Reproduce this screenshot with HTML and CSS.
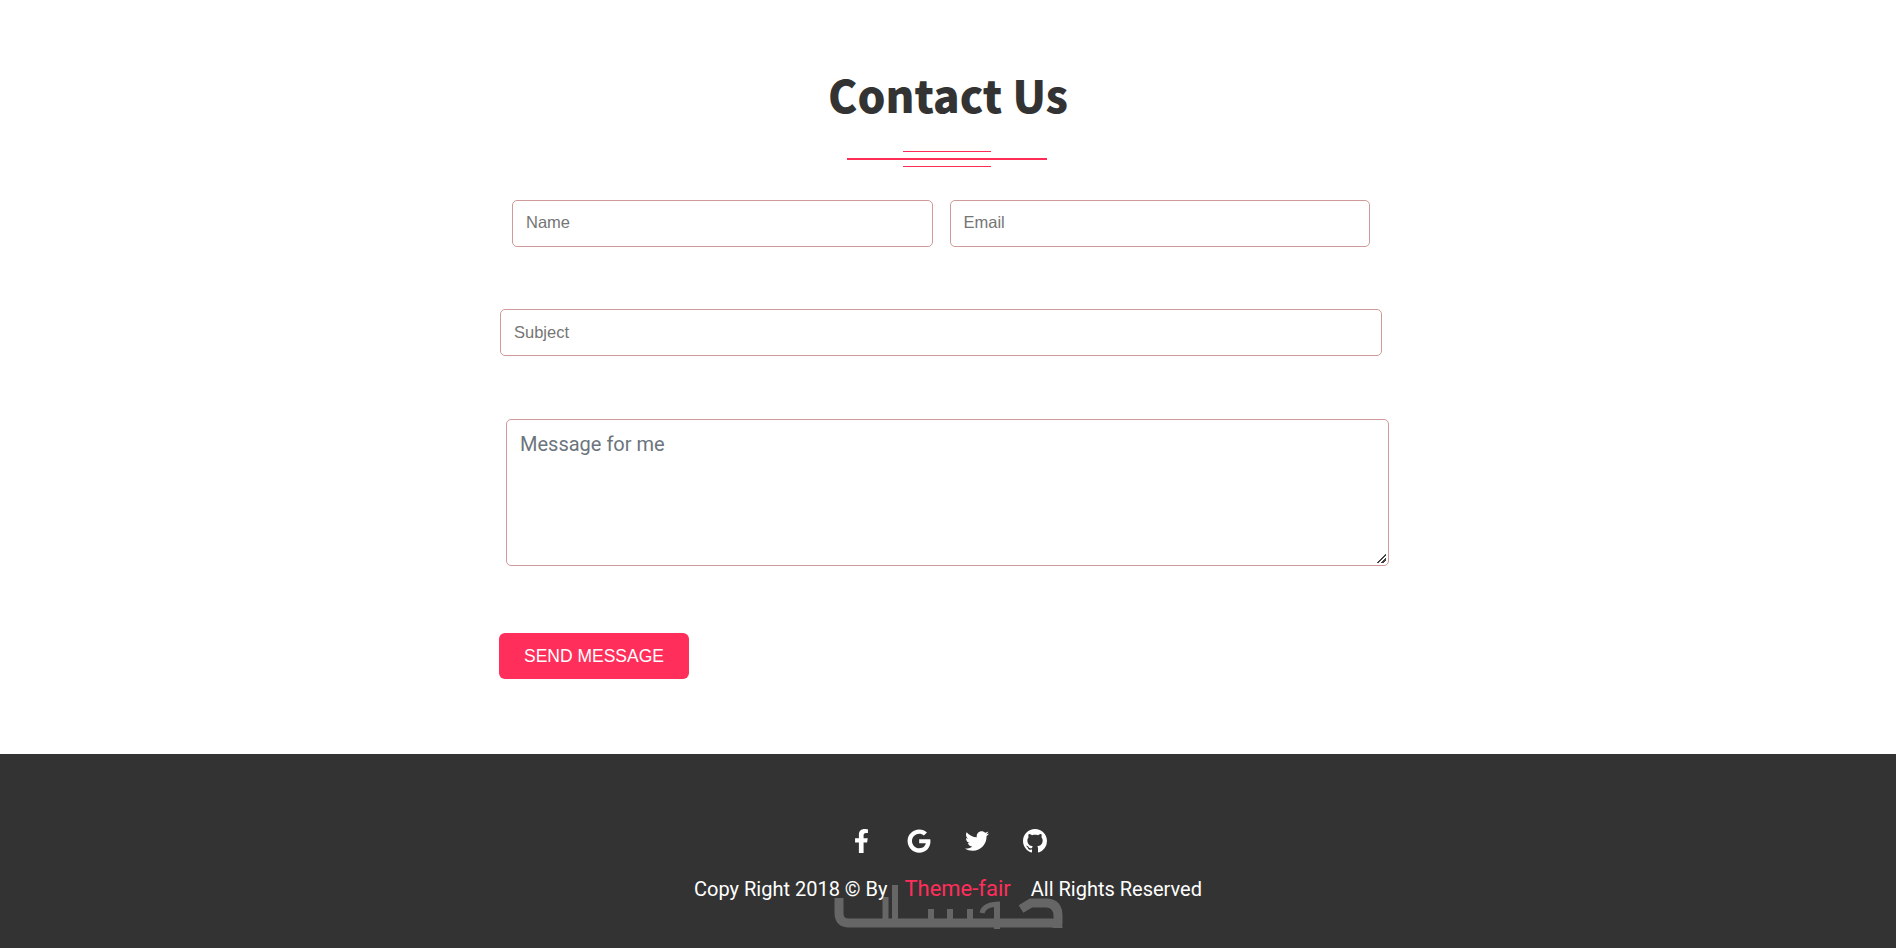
FILE: index.html
```html
<!doctype html>
<html lang="en">
  <head>
    <meta charset="UTF-8" />
    <title>Contact Us</title>
    <link rel="stylesheet" href="styles.css">
  </head>
  <body>
    <section class="contact">
      <h2 class="title">Contact Us</h2>
      <div class="divider">
        <span class="divider-short"></span>
        <span class="divider-long"></span>
        <span class="divider-short"></span>
      </div>
      <form class="contact-form">
        <div class="row-two">
          <input type="text" class="field" placeholder="Name" />
          <input type="text" class="field" placeholder="Email" />
        </div>
        <input type="text" class="field field-subject" placeholder="Subject" />
        <textarea class="field-message" placeholder="Message for me"></textarea>
        <button type="button" class="send-btn">SEND MESSAGE</button>
      </form>
    </section>
    <footer class="footer">
      <div class="social">
        <a href="#" class="social-link">
          <svg viewBox="0 0 320 512" width="15" height="24"><path fill="#fff" d="M279.14 288l14.22-92.66h-88.91v-60.13c0-25.35 12.42-50.06 52.24-50.06h40.42V6.26S260.43 0 225.36 0c-73.22 0-121.08 44.38-121.08 124.72v70.62H22.89V288h81.39v224h100.17V288z"/></svg>
        </a>
        <a href="#" class="social-link">
          <svg viewBox="0 0 488 512" width="24" height="24"><path fill="#fff" d="M488 261.8C488 403.3 391.1 504 248 504 110.8 504 0 393.2 0 256S110.8 8 248 8c66.8 0 123 24.5 166.3 64.9l-67.5 64.9C258.5 52.6 94.3 116.6 94.3 256c0 86.5 69.1 156.6 153.7 156.6 98.2 0 135-70.4 140.8-106.9H248v-85.3h236.1c2.3 12.7 3.9 24.9 3.9 41.4z"/></svg>
        </a>
        <a href="#" class="social-link">
          <svg viewBox="0 0 512 512" width="24" height="24"><path fill="#fff" d="M459.37 151.716c.325 4.548.325 9.097.325 13.645 0 138.72-105.583 298.558-298.558 298.558-59.452 0-114.68-17.219-161.137-47.106 8.447.974 16.568 1.299 25.34 1.299 49.055 0 94.213-16.568 130.274-44.832-46.132-.975-84.792-31.188-98.112-72.772 6.498.974 12.995 1.624 19.818 1.624 9.421 0 18.843-1.3 27.614-3.573-48.081-9.747-84.143-51.98-84.143-102.985v-1.299c13.969 7.797 30.214 12.67 47.431 13.319-28.264-18.843-46.781-51.005-46.781-87.391 0-19.492 5.197-37.36 14.294-52.954 51.655 63.675 129.3 105.258 216.365 109.807-1.624-7.797-2.599-15.918-2.599-24.04 0-57.828 46.782-104.934 104.934-104.934 30.213 0 57.502 12.67 76.67 33.137 23.715-4.548 46.456-13.32 66.599-25.34-7.798 24.366-24.366 44.833-46.132 57.827 21.117-2.273 41.584-8.122 60.426-16.243-14.292 20.791-32.161 39.308-52.628 54.253z"/></svg>
        </a>
        <a href="#" class="social-link">
          <svg viewBox="0 0 16 16" width="24" height="24"><path fill="#fff" d="M8 0C3.58 0 0 3.58 0 8c0 3.54 2.29 6.53 5.47 7.59.4.07.55-.17.55-.38 0-.19-.01-.82-.01-1.49-2.01.37-2.53-.49-2.69-.94-.09-.23-.48-.94-.82-1.13-.28-.15-.68-.52-.01-.53.63-.01 1.08.58 1.23.82.72 1.21 1.87.87 2.33.66.07-.52.28-.87.51-1.07-1.78-.2-3.64-.89-3.64-3.95 0-.87.31-1.59.82-2.15-.08-.2-.36-1.02.08-2.12 0 0 .67-.21 2.2.82.64-.18 1.32-.27 2-.27s1.36.09 2 .27c1.53-1.04 2.2-.82 2.2-.82.44 1.1.16 1.92.08 2.12.51.56.82 1.27.82 2.15 0 3.07-1.87 3.75-3.65 3.95.29.25.54.73.54 1.48 0 1.07-.01 1.93-.01 2.2 0 .21.15.46.55.38A8.01 8.01 0 0 0 16 8c0-4.42-3.58-8-8-8z"/></svg>
        </a>
      </div>
      <p class="copyright">Copy Right 2018 © By <a href="#" class="copyright-link">Theme-fair</a> All Rights Reserved</p>
      <svg class="watermark" viewBox="0 0 230 50" width="230" height="50">
        <path fill="none" stroke="#fff" stroke-width="9" d="M5 18V33Q5 43 15 43H217Q224 43 224 47V48M187 29L197 23H213Q224 24 224 36V44"/>
        <path fill="none" stroke="#fff" stroke-width="6" d="M51.5 17V42M61 5V42M97 29V40M116 29V40M136 29V40M163 23V49"/>
        <path fill="none" stroke="#fff" stroke-width="5" d="M148 33Q150 24 166 24"/>
      </svg>
    </footer>
  </body>
</html>
```
FILE: styles.css
```css
* {
  box-sizing: border-box;
}
body {
  margin: 0;
  background: #fff;
  font-family: "Roboto", sans-serif;
}
.contact {
  height: 754px;
  padding-top: 64px;
}
.title {
  margin: 0;
  text-align: center;
  font-family: "Noto Sans CJK SC", "Liberation Sans", sans-serif;
  font-size: 44px;
  font-weight: 900;
  line-height: 60px;
  color: #333;
}
.divider {
  display: flex;
  flex-direction: column;
  align-items: center;
  margin: 27px 2px 0 0;
}
.divider-short {
  width: 88px;
  height: 1px;
  background: #ff2d55;
}
.divider-long {
  width: 200px;
  height: 2px;
  margin: 6px 0;
  background: #ff2d55;
}
.contact-form {
  display: flex;
  flex-direction: column;
  width: 890px;
  margin: 33px 0 0 499px;
}
.row-two {
  display: flex;
  gap: 17px;
  margin-left: 13px;
  width: 858px;
}
.field {
  height: 47px;
  padding: 0 13px 2px;
  border: 1px solid #cf9a9a;
  border-radius: 5px;
  font-family: "Liberation Sans", Arial, sans-serif;
  font-size: 16.5px;
  outline: none;
  flex: 1;
  min-width: 0;
}
.field::placeholder {
  color: #757575;
  opacity: 1;
}
.field-message::placeholder {
  color: #6c757d;
  opacity: 1;
}
.field-subject {
  flex: none;
  width: 882px;
  margin: 62px 0 0 1px;
  padding-bottom: 0;
}
.field-message {
  display: block;
  width: 883px;
  height: 147px;
  margin: 63px 0 0 7px;
  padding: 13px;
  border: 1px solid #cf9a9a;
  border-radius: 5px;
  font-family: "Roboto", sans-serif;
  font-size: 20px;
  line-height: 23px;
  outline: none;
  resize: vertical;
}
.field-message::-webkit-resizer {
  background: linear-gradient(135deg, transparent 46%, #444 46%, #444 60%, transparent 60%, transparent 72%, #444 72%, #444 86%, transparent 86%) 4px 4px / 9px 9px no-repeat;
}
.send-btn {
  align-self: flex-start;
  width: 190px;
  height: 46px;
  margin-top: 67px;
  padding: 0;
  border: 0;
  border-radius: 6px;
  background: #ff2e5b;
  color: #fff;
  font-family: "Liberation Sans", Arial, sans-serif;
  font-size: 17.5px;
}
.footer {
  position: relative;
  height: 194px;
  padding-top: 75px;
  background: #333;
}
.social {
  display: flex;
  justify-content: center;
  gap: 34px;
}
.social-link {
  display: flex;
  justify-content: center;
  width: 24px;
  height: 24px;
}
.copyright {
  margin: 23px 0 0;
  text-align: center;
  font-size: 20px;
  line-height: 26px;
  color: #fff;
}
.copyright-link {
  margin: 0 15px 0 12px;
  font-size: 22px;
  color: #ff2e5b;
  text-decoration: none;
}
.watermark {
  position: absolute;
  left: 834px;
  top: 126px;
  opacity: 0.25;
}
```
